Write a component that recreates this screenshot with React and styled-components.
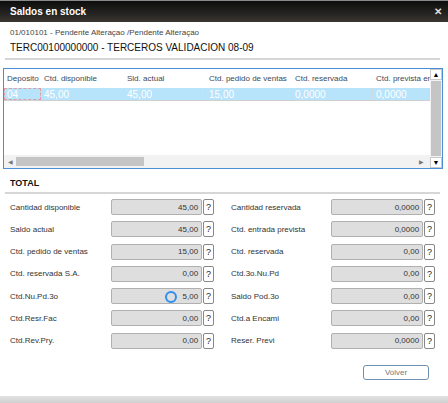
import React from "react";
import styled, { createGlobalStyle } from "styled-components";

const GlobalStyle = createGlobalStyle`
  html, body {
    margin: 0;
    padding: 0;
    background: #fff;
  }
  body {
    font-family: "Liberation Sans", Arial, sans-serif;
  }
`;

const Window = styled.div`
  width: 448px;
  height: 403px;
  display: flex;
  flex-direction: column;
  background: #fff;
  overflow: hidden;
`;

const TitleBar = styled.div`
  height: 22px;
  flex: none;
  display: flex;
  align-items: center;
  justify-content: space-between;
  padding: 0 6px 0 10px;
  background: linear-gradient(#0c0d0d, #2a2825 70%, #3a3631);
  border-top: 1px solid #8a8a8a;
  box-sizing: border-box;
  color: #fff;
  font-size: 10px;
  font-weight: bold;
`;

const Close = styled.span`
  font-size: 10px;
  color: #ddd;
  font-weight: bold;
`;

const Body = styled.div`
  flex: 1;
  display: flex;
  flex-direction: column;
`;

const Header = styled.div`
  margin: 0 8px 0 5px;
  padding: 5px 0 3px 5px;
  border-bottom: 2px solid #d6d6d6;
`;

const SubLine = styled.div`
  font-size: 8px;
  color: #444;
  line-height: 12px;
`;

const MainLine = styled.div`
  font-size: 10px;
  color: #111;
  line-height: 14px;
  margin-top: 2px;
`;

const GridBox = styled.div`
  margin: 8px 5px 0 3px;
  height: 101px;
  border: 1px solid #4a8fd6;
  box-sizing: border-box;
  display: flex;
  background: #fff;
`;

const GridMain = styled.div`
  flex: 1;
  display: flex;
  flex-direction: column;
  min-width: 0;
`;

const Rows = styled.div`
  flex: 1;
  overflow: hidden;
`;

const Row = styled.div`
  display: flex;
  height: ${p => (p.head ? "19px" : "12px")};
  align-items: center;
  background: ${p => (p.selected ? "#b7e3fb" : "transparent")};
  border-bottom: ${p => (p.selected ? "1px solid #cfcfcf" : "none")};
`;

const Cell = styled.div`
  width: ${p => p.w}px;
  flex: none;
  box-sizing: border-box;
  height: 100%;
  display: flex;
  align-items: center;
  padding-left: 3px;
  white-space: nowrap;
  overflow: hidden;
  font-size: ${p => (p.head ? "8px" : "10px")};
  color: ${p => (p.head ? "#3b4a5a" : "#fff")};
  border-right: ${p => (p.head ? "none" : "1px solid #cfd9df")};
  outline: ${p => (p.focus ? "1px dashed #d9a0a8" : "none")};
  outline-offset: -1px;
`;

const HScroll = styled.div`
  height: 13px;
  flex: none;
  background: #f2f2f2;
  display: flex;
  align-items: center;
  padding: 0 6px 0 4px;
  gap: 3px;
  font-size: 6px;
  color: #777;
`;

const HThumb = styled.div`
  width: 128px;
  height: 9px;
  background: #c5c5c5;
`;

const Spacer = styled.div`
  flex: 1;
`;

const VScroll = styled.div`
  width: 12px;
  flex: none;
  display: flex;
  flex-direction: column;
  background: #f2f2f2;
`;

const Arrow = styled.div`
  height: 11px;
  flex: none;
  border: 1px solid #c9c9c9;
  box-sizing: border-box;
  background: #fff;
  display: flex;
  align-items: center;
  justify-content: center;
  font-size: 7px;
  color: #000;
`;

const VThumb = styled.div`
  flex: 1;
  margin: 1px 1px;
  background: #c5c5c5;
`;

const SectionTitle = styled.div`
  margin: 0 8px 0 5px;
  padding: 9px 0 4px 5px;
  border-bottom: 2px solid #d6d6d6;
  font-size: 9px;
  font-weight: bold;
  color: #111;
`;

const Fields = styled.div`
  display: grid;
  grid-template-columns: 204px 204px;
  column-gap: 17px;
  row-gap: 6.3px;
  padding: 5px 0 0 10px;
`;

const Field = styled.div`
  display: flex;
  align-items: center;
  height: 16px;
`;

const Label = styled.div`
  width: ${p => p.w}px;
  flex: none;
  font-size: 8px;
  color: #333;
  white-space: nowrap;
`;

const Input = styled.div`
  position: relative;
  width: ${p => p.w}px;
  height: 16px;
  box-sizing: border-box;
  background: #dedede;
  border: 1px solid #b0b0b0;
  border-radius: 2px;
  display: flex;
  align-items: center;
  justify-content: flex-end;
  padding-right: 3px;
  font-size: 8px;
  color: #333;
`;

const Help = styled.div`
  width: 11px;
  height: 16px;
  margin-left: 1px;
  box-sizing: border-box;
  background: #fff;
  border: 1px solid #888;
  border-radius: 2px;
  display: flex;
  align-items: center;
  justify-content: center;
  font-size: 9px;
  color: #222;
`;

const Ring = styled.div`
  position: absolute;
  left: 53px;
  top: 2px;
  width: 8px;
  height: 8px;
  border: 2.5px solid #2e8ff0;
  border-radius: 50%;
`;

const Footer = styled.div`
  flex: 1;
  display: flex;
  justify-content: flex-end;
  align-items: flex-start;
  padding: 16px 19px 0 0;
`;

const Button = styled.button`
  width: 66px;
  height: 15px;
  padding: 0;
  background: #fff;
  border: 1px solid #6f92b3;
  border-radius: 3px;
  font-family: inherit;
  font-size: 8px;
  color: #777;
`;

const BottomEdge = styled.div`
  height: 7px;
  flex: none;
  background: linear-gradient(#e2e2e2, #cfcfcf);
`;

const columns = [
  { t: "Deposito", w: 37, v: "04" },
  { t: "Ctd. disponible", w: 83, v: "45,00" },
  { t: "Sld. actual", w: 82, v: "45,00" },
  { t: "Ctd. pedido de ventas", w: 86, v: "15,00" },
  { t: "Ctd. reservada", w: 81, v: "0,0000" },
  { t: "Ctd. prevista entrada", w: 59, v: "0,0000" },
];

const left = [
  ["Cantidad disponible", "45,00"],
  ["Saldo actual", "45,00"],
  ["Ctd. pedido de ventas", "15,00"],
  ["Ctd. reservada S.A.", "0,00"],
  ["Ctd.Nu.Pd.3o", "5,00", true],
  ["Ctd.Resr.Fac", "0,00"],
  ["Ctd.Rev.Pry.", "0,00"],
];

const right = [
  ["Cantidad reservada", "0,0000"],
  ["Ctd. entrada prevista", "0,0000"],
  ["Ctd. reservada", "0,00"],
  ["Ctd.3o.Nu.Pd", "0,00"],
  ["Saldo Pod.3o", "0,00"],
  ["Ctd.a Encami", "0,00"],
  ["Reser. Previ", "0,0000"],
];

const FieldRow = ({ label, value, lw, iw, ring }) => (
  <Field>
    <Label w={lw}>{label}</Label>
    <Input w={iw}>
      {ring && <Ring />}
      {value}
    </Input>
    <Help>?</Help>
  </Field>
);

export default function App() {
  const cells = [];
  for (let i = 0; i < 7; i++) {
    cells.push(
      <FieldRow key={"l" + i} label={left[i][0]} value={left[i][1]} ring={left[i][2]} lw={101} iw={92} />
    );
    cells.push(
      <FieldRow key={"r" + i} label={right[i][0]} value={right[i][1]} lw={100} iw={93} />
    );
  }

  return (
    <>
      <GlobalStyle />
      <Window>
        <TitleBar>
          Saldos en stock
          <Close>✕</Close>
        </TitleBar>
        <Body>
          <Header>
            <SubLine>01/010101 - Pendente Alteraçao /Pendente Alteraçao</SubLine>
            <MainLine>TERC00100000000 - TERCEROS VALIDACION 08-09</MainLine>
          </Header>
          <GridBox>
            <GridMain>
              <Rows>
                <Row head>
                  {columns.map(c => (
                    <Cell head key={c.t} w={c.w}>{c.t}</Cell>
                  ))}
                </Row>
                <Row selected>
                  {columns.map((c, i) => (
                    <Cell key={c.t} w={c.w} focus={i === 0}>{c.v}</Cell>
                  ))}
                </Row>
              </Rows>
              <HScroll>
                <span>◀</span>
                <HThumb />
                <Spacer />
                <span>▶</span>
              </HScroll>
            </GridMain>
            <VScroll>
              <Arrow>▲</Arrow>
              <VThumb />
              <Arrow>▼</Arrow>
            </VScroll>
          </GridBox>
          <SectionTitle>TOTAL</SectionTitle>
          <Fields>{cells}</Fields>
          <Footer>
            <Button>Volver</Button>
          </Footer>
          <BottomEdge />
        </Body>
      </Window>
    </>
  );
}
